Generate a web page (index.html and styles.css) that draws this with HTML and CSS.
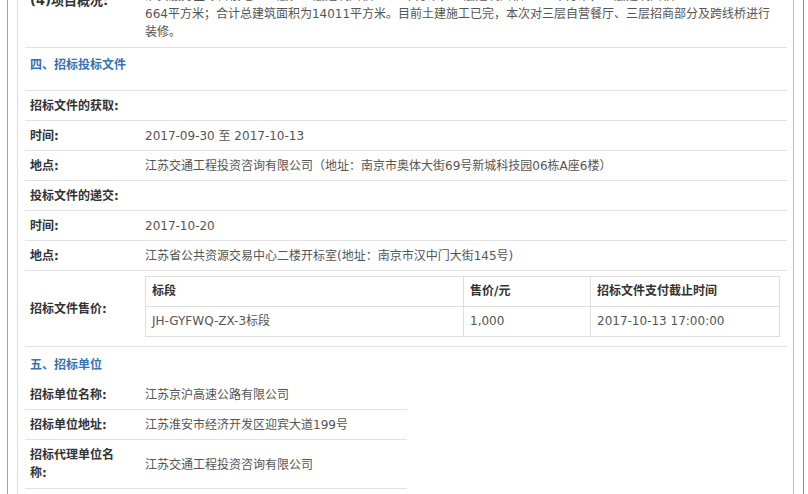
FILE: index.html
```html
<!DOCTYPE html>
<html lang="zh-CN">
<head>
    <meta charset="UTF-8">
    <meta name="viewport" content="width=device-width, initial-scale=1.0">
    <title>招标公告</title>
    <link rel="stylesheet" href="styles.css">
</head>
<body>
    <div class="page">
        <div class="frame">

            <div class="row first">
                <div class="label">(4)项目概况:</div>
                <div class="value">淮安服务区综合楼地上三层，一层建筑面积4673平方米，二层建筑面积4674平方米，三层建筑面积4<br>664平方米；合计总建筑面积为14011平方米。目前土建施工已完，本次对三层自营餐厅、三层招商部分及跨线桥进行<br>装修。</div>
            </div>

            <div class="row section four">
                <div class="heading">四、招标投标文件</div>
            </div>

            <div class="row">
                <div class="label">招标文件的获取:</div>
                <div class="value"></div>
            </div>
            <div class="row">
                <div class="label">时间:</div>
                <div class="value">2017-09-30 至 2017-10-13</div>
            </div>
            <div class="row">
                <div class="label">地点:</div>
                <div class="value">江苏交通工程投资咨询有限公司（地址：南京市奥体大街69号新城科技园06栋A座6楼）</div>
            </div>
            <div class="row">
                <div class="label">投标文件的递交:</div>
                <div class="value"></div>
            </div>
            <div class="row">
                <div class="label">时间:</div>
                <div class="value">2017-10-20</div>
            </div>
            <div class="row">
                <div class="label">地点:</div>
                <div class="value">江苏省公共资源交易中心二楼开标室(地址：南京市汉中门大街145号)</div>
            </div>

            <div class="row price">
                <div class="label">招标文件售价:</div>
                <div class="value">
                    <table class="sub">
                        <tr>
                            <th class="c1">标段</th>
                            <th class="c2">售价/元</th>
                            <th>招标文件支付截止时间</th>
                        </tr>
                        <tr>
                            <td>JH-GYFWQ-ZX-3标段</td>
                            <td>1,000</td>
                            <td>2017-10-13 17:00:00</td>
                        </tr>
                    </table>
                </div>
            </div>

            <div class="row section five">
                <div class="heading">五、招标单位</div>
            </div>

            <div class="units">
                <div class="row">
                    <div class="label">招标单位名称:</div>
                    <div class="value">江苏京沪高速公路有限公司</div>
                </div>
                <div class="row">
                    <div class="label">招标单位地址:</div>
                    <div class="value">江苏淮安市经济开发区迎宾大道199号</div>
                </div>
                <div class="row tall">
                    <div class="label">招标代理单位名称:</div>
                    <div class="value">江苏交通工程投资咨询有限公司</div>
                </div>
            </div>

        </div>
    </div>
</body>
</html>
```

FILE: styles.css
```css
body {
    margin: 0;
    background-color: #ffffff;
    font-family: "DejaVu Sans", "Noto Sans CJK SC", sans-serif;
    font-size: 12px;
    line-height: 18px;
    color: #555;
}

.page {
    margin: -19px 4px 0 7px;
    padding: 0 9px;
    border-left: 1px solid #a4a4a4;
    border-right: 1px solid #8c8c8c;
    min-height: 540px;
}

.frame {
    padding: 0 6px 0 7px;
    border-left: 1px solid #dcdcdc;
    border-right: 1px solid #b6c0d2;
    min-height: 540px;
}

.row {
    display: grid;
    grid-template-columns: 115px 1fr;
    border-bottom: 1px solid #e2e2e2;
}

.label {
    padding: 6px 20px 5px 5px;
    font-weight: bold;
    color: #333;
}

.value {
    padding: 6px 5px 5px 5px;
}

.row.first .label,
.row.first .value {
    padding-top: 6px;
    padding-bottom: 6px;
}

.row.first .label {
    padding-top: 11px;
    font-size: 13px;
}

/* section titles */
.row.section {
    display: block;
}

.heading {
    padding: 0 5px;
    font-weight: bold;
    color: #3573b5;
}

.row.four {
    padding: 8px 0 16px;
}

.row.five {
    padding: 9px 0 6px;
    border-bottom: none;
}

/* price table */
.row.price .label {
    align-self: center;
}

.row.price .value {
    padding: 5px 7px 9px 5px;
}

.sub {
    width: 100%;
    border-collapse: collapse;
}

.sub th,
.sub td {
    border: 1px solid #dedede;
    padding: 5px 6px 6px;
    text-align: left;
    height: 18px;
}

.sub th {
    font-weight: bold;
    color: #333;
}

.sub .c1 {
    width: 305px;
}

.sub .c2 {
    width: 114px;
}

.units {
    width: 382px;
}

.row.tall .label {
    padding-bottom: 6px;
}

.row.tall .value {
    align-self: center;
}
```
